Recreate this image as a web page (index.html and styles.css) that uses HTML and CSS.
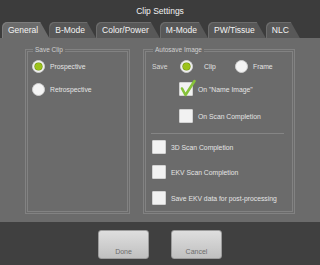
FILE: index.html
```html
<!DOCTYPE html>
<html lang="en">
<head>
    <meta charset="UTF-8">
    <title>Clip Settings</title>
    <link rel="stylesheet" href="styles.css">
</head>
<body>
    <div class="window">
        <header class="titlebar">Clip Settings</header>

        <nav class="tabs">
            <div class="tab active">General</div>
            <div class="tab">B-Mode</div>
            <div class="tab">Color/Power</div>
            <div class="tab">M-Mode</div>
            <div class="tab">PW/Tissue</div>
            <div class="tab">NLC</div>
        </nav>

        <main class="panel">
            <fieldset class="group group-clip">
                <legend>Save Clip</legend>
                <div class="row first">
                    <span class="radio on"></span>
                    <span class="label">Prospective</span>
                </div>
                <div class="row second">
                    <span class="radio"></span>
                    <span class="label">Retrospective</span>
                </div>
            </fieldset>

            <fieldset class="group group-auto">
                <legend>Autosave Image</legend>
                <div class="row first">
                    <span class="save-label">Save</span>
                    <span class="radio on"></span>
                    <span class="label clip-label">Clip</span>
                    <span class="radio"></span>
                    <span class="label">Frame</span>
                </div>
                <div class="row indent r2">
                    <span class="check on">
                        <svg viewBox="0 0 16 18" width="16" height="18"><path d="M2 8.5 L5.5 15 L14.5 1" fill="none" stroke="#86c23a" stroke-width="2.6" stroke-linecap="round" stroke-linejoin="round"/></svg>
                    </span>
                    <span class="label">On "Name Image"</span>
                </div>
                <div class="row indent r3">
                    <span class="check"></span>
                    <span class="label">On Scan Completion</span>
                </div>
                <div class="divider"></div>
                <div class="row r4">
                    <span class="check"></span>
                    <span class="label">3D Scan Completion</span>
                </div>
                <div class="row r5">
                    <span class="check"></span>
                    <span class="label">EKV Scan Completion</span>
                </div>
                <div class="row r6">
                    <span class="check"></span>
                    <span class="label">Save EKV data for post-processing</span>
                </div>
            </fieldset>
        </main>

        <footer class="actions">
            <button class="btn">Done</button>
            <button class="btn">Cancel</button>
        </footer>
    </div>
</body>
</html>
```

FILE: styles.css
```css
:root {
    --dark: #3c3c3c;
    --panel: #6b6b6b;
    --tab: #585858;
    --text: #e4e4e4;
    --line: rgba(255, 255, 255, 0.16);
}

* {
    margin: 0;
    padding: 0;
    box-sizing: border-box;
    font-family: 'Liberation Sans', Arial, sans-serif;
}

body {
    background: var(--dark);
    width: 320px;
    height: 265px;
    overflow: hidden;
}

.window {
    display: flex;
    flex-direction: column;
    height: 265px;
}

.titlebar {
    height: 20px;
    padding-top: 5px;
    text-align: center;
    color: #f2f2f2;
    font-size: 8.5px;
    line-height: 12px;
}

/* tabs */
.tabs {
    display: flex;
    align-items: flex-end;
    height: 18px;
    padding-left: 2px;
}

.tab {
    height: 16px;
    padding: 0 11px 0 6px;
    background: var(--tab);
    color: #f4f4f4;
    font-size: 8.5px;
    line-height: 16px;
    border-top-left-radius: 5px;
    clip-path: polygon(0 0, calc(100% - 9px) 0, 100% 100%, 0 100%);
    box-shadow: inset 1px 1px 0 rgba(255, 255, 255, 0.12);
}

.tab.active {
    background: var(--panel);
}

/* main panel */
.panel {
    display: flex;
    gap: 13px;
    height: 184px;
    padding: 8px 25px 8px 25px;
    background: var(--panel);
}

.group {
    border: 3px double var(--line);
    min-width: 0;
}

.group legend {
    margin-left: 1px;
    padding: 0 2px;
    color: #cfcfcf;
    font-size: 6.5px;
    line-height: 8px;
}

.group-clip {
    width: 105px;
    padding: 0 4px;
}

.group-auto {
    flex: 1;
    padding: 0 4px 0 6px;
}

.row {
    display: flex;
    align-items: center;
    height: 14px;
    color: var(--text);
    font-size: 6.8px;
}

.group-clip .row.first { margin-top: 5px; }
.group-clip .row.second { margin-top: 9px; }

.group-auto .row.first { margin-top: 5px; }
.r2 { margin-top: 9px; }
.r3 { margin-top: 13px; }
.r4 { margin-top: 6px; }
.r5 { margin-top: 11px; }
.r6 { margin-top: 12px; }

.indent {
    padding-left: 27px;
}

.save-label {
    width: 28px;
    color: #d8d8d8;
}

.clip-label {
    width: 31px;
    margin-left: 11px !important;
}

.label {
    margin-left: 5px;
    white-space: nowrap;
}

.divider {
    height: 1px;
    margin: 10px 4px 0 -1px;
    background: rgba(255, 255, 255, 0.18);
}

/* controls */
.radio {
    flex: none;
    width: 13px;
    height: 13px;
    border-radius: 50%;
    background: #f4f4f4;
    border: 1px solid #d0d0d0;
    position: relative;
}

.radio.on::after {
    content: '';
    position: absolute;
    left: 2px;
    top: 2px;
    width: 7px;
    height: 7px;
    border-radius: 50%;
    background: #9cc21c;
    box-shadow: 0 0 0 0.6px #6e8f10;
}

.check {
    flex: none;
    width: 14px;
    height: 14px;
    background: #f2f2f2;
    border: 1px solid #d2d2d2;
    border-radius: 1px;
    position: relative;
}

.check svg {
    position: absolute;
    left: 0;
    top: -3px;
    overflow: visible;
}

/* footer buttons */
.actions {
    flex: 1;
    display: flex;
    justify-content: center;
    gap: 22px;
    padding-top: 8px;
    background: #404040;
}

.btn {
    width: 51px;
    height: 29px;
    display: flex;
    align-items: flex-end;
    justify-content: center;
    padding-bottom: 3px;
    background: linear-gradient(#dedede, #c0c0c0);
    border: 1px solid #9c9c9c;
    border-radius: 3px;
    color: #6c6c6c;
    font-size: 7px;
}
```
